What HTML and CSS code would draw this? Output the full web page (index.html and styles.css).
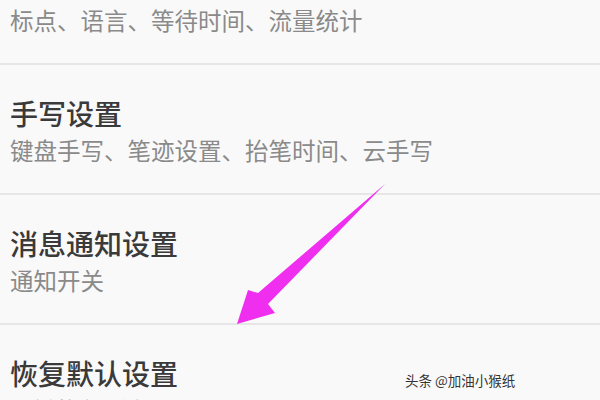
FILE: index.html
```html
<!DOCTYPE html>
<html lang="zh-CN">
<head>
    <meta charset="UTF-8">
    <meta name="viewport" content="width=device-width, initial-scale=1.0">
    <title>输入法设置</title>
    <link rel="stylesheet" href="styles.css">
</head>
<body>
    <div class="settings-list">
        <div class="item item-cut">
            <div class="item-desc">标点、语言、等待时间、流量统计</div>
        </div>
        <div class="item">
            <div class="item-title">手写设置</div>
            <div class="item-desc">键盘手写、笔迹设置、抬笔时间、云手写</div>
        </div>
        <div class="item">
            <div class="item-title">消息通知设置</div>
            <div class="item-desc">通知开关</div>
        </div>
        <div class="item">
            <div class="item-title">恢复默认设置</div>
            <div class="item-desc">一键恢复所有设置项</div>
        </div>
    </div>

    <svg class="pointer" width="600" height="400" viewBox="0 0 600 400">
        <polygon points="385,184 268,304 275,313 237,324 248,290 258,293" fill="#f02ef0"/>
    </svg>

    <div class="watermark">头条 @加油小猴纸</div>
</body>
</html>
```

FILE: styles.css
```css
body {
    margin: 0;
    background: #f9f9f9;
    font-family: "Noto Sans CJK SC", "Noto Sans", sans-serif;
    width: 600px;
    height: 400px;
    overflow: hidden;
    position: relative;
}

.settings-list {
    display: flex;
    flex-direction: column;
}

.item {
    padding: 29px 10px 25px;
    border-bottom: 2px solid #e6e6e6;
}

.item-cut {
    padding-top: 2px;
}

.item-title {
    font-size: 28px;
    line-height: 38px;
    font-weight: 500;
    color: #3a3a3a;
}

.item-desc {
    font-size: 23.5px;
    line-height: 36px;
    color: #8a8a8a;
}

.pointer {
    position: absolute;
    left: 0;
    top: 0;
}

.watermark {
    position: absolute;
    left: 405px;
    top: 371px;
    font-size: 13.5px;
    line-height: 18px;
    color: #333;
    text-shadow: 0 0 2px #fff, 0 0 1px #fff;
}
```
